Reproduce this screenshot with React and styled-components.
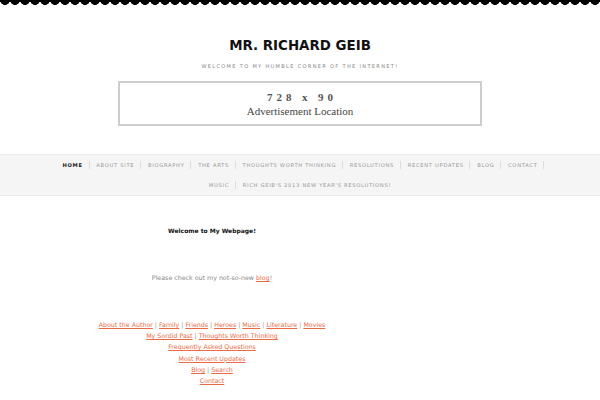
import React from 'react';
import styled, { createGlobalStyle } from 'styled-components';

const GlobalStyle = createGlobalStyle`
  html, body {
    margin: 0;
    padding: 0;
    background: #fff;
  }
  body {
    font-family: "DejaVu Sans", Verdana, sans-serif;
  }
`;

const Page = styled.div`
  width: 600px;
  min-height: 400px;
  background: #fff;
`;

// scalloped black edge at the very top
const Scallop = styled.div`
  height: 6px;
  background:
    linear-gradient(#000, #000) 0 0 / 100% 2px no-repeat,
    radial-gradient(circle at 5px 0, #000 4.6px, transparent 5.2px) 0 0 / 10px 6px repeat-x;
`;

const Header = styled.header`
  display: flex;
  flex-direction: column;
  align-items: center;
  padding-top: 32px;
`;

const Title = styled.h1`
  margin: 0;
  font-family: "DejaVu Sans", Verdana, sans-serif;
  font-weight: bold;
  font-size: 13.4px;
  line-height: 16px;
  color: #111;
`;

const Tagline = styled.div`
  margin-top: 9px;
  font-size: 5.1px;
  line-height: 7px;
  letter-spacing: 1.3px;
  color: #888;
  text-transform: uppercase;
`;

const AdBox = styled.div`
  margin-top: 11px;
  width: 360px;
  height: 41px;
  border: 2px solid #cdcdcd;
  display: flex;
  flex-direction: column;
  align-items: center;
  justify-content: center;
  font-family: "Liberation Serif", "Times New Roman", serif;
  color: #555;
`;

const AdSize = styled.div`
  font-weight: bold;
  font-size: 11px;
  line-height: 12px;
  letter-spacing: 3.9px;
  margin-left: 3.9px;
`;

const AdLabel = styled.div`
  margin-top: 2px;
  font-size: 11px;
  line-height: 12px;
  color: #444;
`;

const Nav = styled.nav`
  margin-top: 28px;
  background: #f5f5f5;
  border-top: 1px solid #ececec;
  border-bottom: 1px solid #ececec;
  padding: 0 45px;
`;

const NavList = styled.ul`
  list-style: none;
  margin: 0;
  padding: 0;
  display: flex;
  flex-wrap: wrap;
  justify-content: center;
`;

const NavItem = styled.li`
  height: 20px;
  display: flex;
  align-items: center;
  padding: 0 6.8px;
  font-size: 5.2px;
  letter-spacing: 0.7px;
  text-transform: uppercase;
  color: ${(p) => (p.active ? '#222' : '#999')};
  font-weight: ${(p) => (p.active ? 'bold' : 'normal')};
  position: relative;

  &::after {
    content: '';
    display: ${(p) => (p.last ? 'none' : 'block')};
    position: absolute;
    right: 0;
    top: 6px;
    height: 8px;
    border-right: 1px solid #dedede;
  }
`;

const Main = styled.main`
  width: 424px;
  text-align: center;
  font-size: 6.3px;
  color: #888;
`;

const Welcome = styled.p`
  margin: 30px 0 0;
  font-weight: bold;
  font-size: 6px;
  line-height: 10px;
  color: #111;
`;

const Para = styled.p`
  margin: ${(p) => p.gap || '37px'} 0 0;
  line-height: ${(p) => p.lh || '10px'};
`;

const Link = styled.a`
  color: #ec6a43;
  text-decoration: underline;
`;

const Sep = styled.span`
  color: #999;
`;

const navItems = [
  'Home',
  'About Site',
  'Biography',
  'The Arts',
  'Thoughts Worth Thinking',
  'Resolutions',
  'Recent Updates',
  'Blog',
  'Contact',
  'Music',
  "Rich Geib's 2013 New Year's Resolutions!",
];

const linkRows = [
  ['About the Author', 'Family', 'Friends', 'Heroes', 'Music', 'Literature', 'Movies'],
  ['My Sordid Past', 'Thoughts Worth Thinking'],
  ['Frequently Asked Questions'],
  ['Most Recent Updates'],
  ['Blog', 'Search'],
  ['Contact'],
];

function LinkRow({ items }) {
  return (
    <div>
      {items.map((t, i) => (
        <React.Fragment key={t}>
          {i > 0 && <Sep> | </Sep>}
          <Link href="#">{t}</Link>
        </React.Fragment>
      ))}
    </div>
  );
}

export default function App() {
  return (
    <Page>
      <GlobalStyle />
      <Scallop />
      <Header>
        <Title>MR. RICHARD GEIB</Title>
        <Tagline>Welcome to my humble corner of the internet!</Tagline>
        <AdBox>
          <AdSize>728 x 90</AdSize>
          <AdLabel>Advertisement Location</AdLabel>
        </AdBox>
      </Header>
      <Nav>
        <NavList>
          {navItems.map((n, i) => (
            <NavItem key={n} active={i === 0} last={i === navItems.length - 1}>
              {n}
            </NavItem>
          ))}
        </NavList>
      </Nav>
      <Main>
        <Welcome>Welcome to My Webpage!</Welcome>
        <Para>
          Please check out my not-so-new <Link href="#">blog</Link>!
        </Para>
        <Para gap="36px" lh="11.2px">
          {linkRows.map((r, i) => (
            <LinkRow key={i} items={r} />
          ))}
        </Para>
      </Main>
    </Page>
  );
}
